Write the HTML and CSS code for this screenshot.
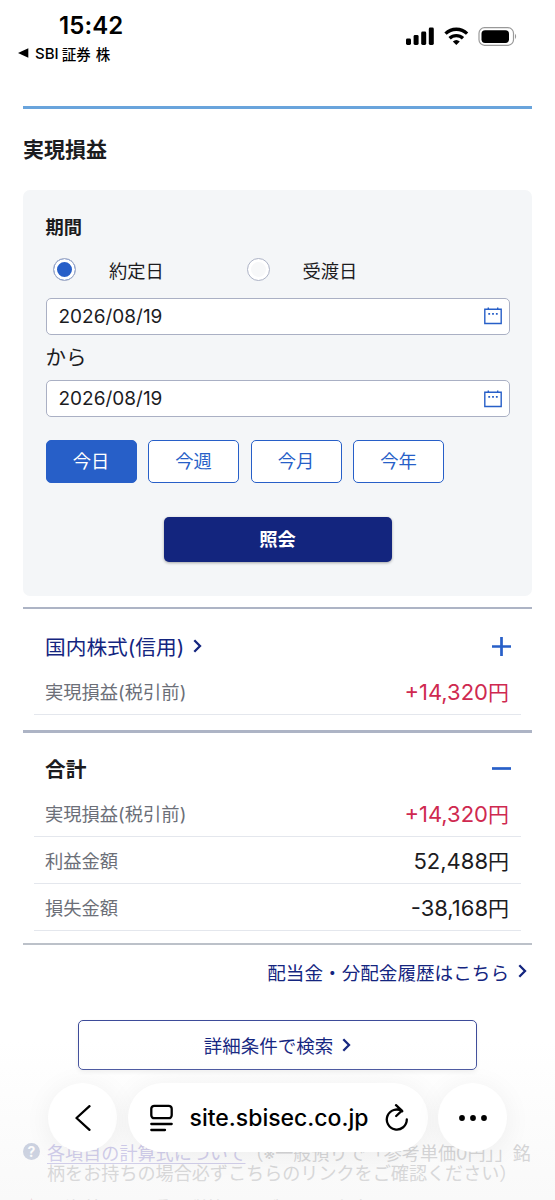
FILE: index.html
```html
<!DOCTYPE html>
<html lang="ja">
<head>
<meta charset="utf-8">
<title>実現損益</title>
<link rel="stylesheet" href="styles.css">
</head>
<body>
<header class="status">
  <div class="status-left">
    <div class="clock">15:42</div>
    <div class="back-app"><svg width="11" height="10" viewBox="0 0 11 10"><path d="M0 5 10.300 .3V9.700Z"/></svg><span class="app-name">SBI</span><span class="app-jp">証券</span><span class="app-jp">株</span></div>
  </div>
  <svg class="status-icons" width="114" height="20" viewBox="0 0 114 20">
    <rect x="0" y="11.500" width="5" height="6.500" rx="1.400"/><rect x="7.600" y="8" width="5" height="10" rx="1.400"/><rect x="15.200" y="4.500" width="5" height="13.500" rx="1.400"/><rect x="22.800" y="0.500" width="5" height="17.500" rx="1.400"/>
    <g fill="none" stroke="#000" stroke-width="3.300"><path d="M39.500 6.600a15.600 15.600 0 0 1 21.600 0"/><path d="M43.600 11.300a9.700 9.700 0 0 1 13.400 0"/></g>
    <path d="M46.800 14.500a5.300 5.300 0 0 1 7 0L50.300 18Z"/>
    <rect x="73" y=".7" width="34.500" height="17.600" rx="5.500" fill="none" stroke="#999" stroke-width="1.200"/><rect x="75.500" y="3.200" width="27.500" height="12.700" rx="3.600"/><path d="M109 6.800q2.300 2.700 0 5.500z" fill="#999"/>
  </svg>
</header>
<main class="page">
  <h1 class="title">実現損益</h1>
  <form class="panel">
    <div class="panel-label">期間</div>
    <div class="radios">
      <label class="radio"><span class="dot on"></span>約定日</label>
      <label class="radio"><span class="dot"></span>受渡日</label>
    </div>
    <div class="date"><span>2026/08/19</span><svg class="cal" width="18" height="18" viewBox="0 0 18 18"><path class="cal-line" d="M.8 2.300H17.200V16.500H.8ZM4.300 .4V3M13.700 .4V3"/><path class="cal-dots" d="M4.300 6.900H6.100M8.100 6.900H9.900M11.900 6.900H13.700"/></svg></div>
    <div class="from">から</div>
    <div class="date"><span>2026/08/19</span><svg class="cal" width="18" height="18" viewBox="0 0 18 18"><path class="cal-line" d="M.8 2.300H17.200V16.500H.8ZM4.300 .4V3M13.700 .4V3"/><path class="cal-dots" d="M4.300 6.900H6.100M8.100 6.900H9.900M11.900 6.900H13.700"/></svg></div>
    <div class="ranges"><div class="range active">今日</div><div class="range">今週</div><div class="range">今月</div><div class="range">今年</div></div>
    <div class="submit">照会</div>
  </form>
  <section class="group">
    <div class="group-head link">国内株式(信用)<svg class="chev" width="9" height="14" viewBox="0 0 9 14"><path d="M1.300 1.300 7 7 1.300 12.700"/></svg><svg class="toggle" width="19" height="19" viewBox="0 0 19 19"><path d="M0 9.500H19M9.500 0V19"/></svg></div>
    <div class="row"><span>実現損益(税引前)</span><b class="plus">+14,320<i>円</i></b></div>
  </section>
  <section class="group total">
    <div class="group-head strong">合計<svg class="toggle" width="19" height="19" viewBox="0 0 19 19"><path d="M0 9.500H19"/></svg></div>
    <div class="row"><span>実現損益(税引前)</span><b class="plus">+14,320<i>円</i></b></div>
    <div class="row"><span>利益金額</span><b>52,488<i>円</i></b></div>
    <div class="row"><span>損失金額</span><b>-38,168<i>円</i></b></div>
  </section>
  <div class="history">配当金・分配金履歴はこちら<svg class="chev" width="9" height="14" viewBox="0 0 9 14"><path d="M1.300 1.300 7 7 1.300 12.700"/></svg></div>
  <div class="detail">詳細条件で検索<svg class="chev" width="9" height="14" viewBox="0 0 9 14"><path d="M1.300 1.300 7 7 1.300 12.700"/></svg></div>
  <div class="notes">
    <span class="help">?</span>
    <p><u>各項目の計算式について</u>（※一般預りで「参考単価0円」」銘<br>柄をお持ちの場合必ずこちらのリンクをご確認ください）</p>
  </div>
  <div class="notes second"><span class="warn"></span><p>・海外ETF二重課税等は、ブローカ上表示いた</p></div>
</main>
<div class="haze"></div>
<nav class="toolbar">
  <div class="round"><svg width="16" height="26" viewBox="0 0 16 26"><path d="M14.500 1.200 1.500 13 14.500 24.800"/></svg></div>
  <div class="address">
    <svg width="24" height="28" viewBox="0 0 24 28"><rect x="1.300" y="1.800" width="20.400" height="12.400" rx="3"/><path d="M1.300 20H21.700M1.300 26H15"/></svg>
    <span>site.sbisec.co.jp</span>
    <svg class="reload" width="24" height="28" viewBox="0 0 24 28"><path d="M17.300 7.200A10 10 0 1 0 21.800 15.500M11 1.200 16.900 6.600 11.200 12"/></svg>
  </div>
  <div class="round"><svg width="30" height="8" viewBox="0 0 30 8"><g fill="#000" stroke="none"><circle cx="4" cy="4" r="2.900"/><circle cx="15" cy="4" r="2.900"/><circle cx="26" cy="4" r="2.900"/></g></svg></div>
</nav>
</body>
</html>
```

FILE: styles.css
```css
* { box-sizing: border-box; }
body { margin: 0; width: 555px; height: 1200px; overflow: hidden; position: relative; background: #fff; color: #1c1c1f; font-family: Inter, "Noto Sans CJK JP", sans-serif; }
svg { display: block; flex: none; }
.status { height: 106px; padding: 11px 36px 0 18px; display: flex; justify-content: space-between; color: #000; }
.clock { padding-left: 41px; font-size: 24px; line-height: 30px; font-weight: 600; letter-spacing: .1px; }
.back-app { display: flex; align-items: center; height: 24px; font-size: 15px; font-weight: 500; }
.app-name { margin: 0 3px 0 6px; }
.app-jp { margin-right: 5px; font-size: 14.500px; }
.status-icons { margin-top: 16px; margin-right: -1px; }
.page { margin: 0 23px; border-top: 3.500px solid #69a4dc; }
.title { margin: 0; height: 80.500px; line-height: 82px; font-size: 21px; font-weight: 700; }
.panel { height: 406px; padding: 22px 22.500px 0; background: #f4f6f8; border-radius: 7px; display: flex; flex-direction: column; }
.panel-label { height: 30px; line-height: 30px; font-size: 18.300px; font-weight: 700; }
.radios { display: flex; height: 56px; padding: 0 0 0 7.500px; }
.radio { display: flex; align-items: center; width: 193.500px; gap: 33px; font-size: 18.300px; }
.dot { width: 23px; height: 23px; border: 1.500px solid #aeb4c7; border-radius: 50%; background: #f7f8f9; box-shadow: inset 0 0 0 3px #fff; }
.on { background: #275fc8; }
.date { flex: none; height: 37px; display: flex; align-items: center; justify-content: space-between; padding: 0 7px 0 12px; border: 1.500px solid #aab0c4; border-radius: 5px; background: #fff; font-size: 19px; }
.cal-line { fill: none; stroke: #275fc8; stroke-width: 1.400; }
.cal-dots { stroke: #275fc8; stroke-width: 1.600; }
.from { height: 45.500px; line-height: 45.500px; font-size: 20.500px; }
.ranges { margin-top: 22.500px; display: flex; gap: 11.500px; }
.range { width: 91px; height: 43px; line-height: 41px; text-align: center; font-size: 18.300px; color: #275fc8; background: #fff; border: 1.500px solid #275fc8; border-radius: 5px; }
.active { color: #fff; background: #275fc8; }
.submit { align-self: center; margin-top: 34px; width: 228px; height: 45.500px; line-height: 44px; border-radius: 5px; background: #13257e; color: #fff; font-size: 18.300px; font-weight: 700; text-align: center; box-shadow: 0 1px 3px #0005; }
.group { margin-top: 11.500px; border-top: 2px solid #adb4c5; padding: 15px 11px 0; }
.group-head { display: flex; align-items: center; height: 44px; padding: 0 11px; font-size: 20.700px; }
.link, .history, .detail { color: #14257f; }
.strong { font-weight: 700; }
.chev { fill: none; stroke: #14257f; stroke-width: 2.300; margin-left: 9px; }
.toggle { margin-left: auto; margin-right: -1px; fill: none; stroke: #275fc8; stroke-width: 2.700; }
.row { height: 47px; padding: 0 12px 0 11px; display: flex; align-items: center; justify-content: space-between; border-bottom: 1.500px solid #e4e7ed; font-size: 18.300px; color: #6c6f78; }
.row b { font-size: 22px; font-weight: 400; color: #1c1c1f; }
.row i { font-style: normal; font-size: 21px; }
.row .plus { color: #cf2950; }
.total { margin-top: 15px; padding-top: 13px; border-top-width: 3px; border-bottom: 2px solid #bcc1c9; padding-bottom: 12px; }
.history { height: 52px; display: flex; align-items: center; justify-content: flex-end; padding-right: 5px; font-size: 18.600px; }
.detail { width: 399px; height: 50px; margin: 23px auto 0; display: flex; align-items: center; justify-content: center; border: 1.500px solid #3d4b99; border-radius: 5px; font-size: 18.500px; background: #fff; box-shadow: 0 2px 4px #0001; }
.notes { display: flex; margin-top: 73px; color: #c4c4c6; font-size: 18.100px; line-height: 20px; white-space: nowrap; }
.notes p { margin: 0 0 0 7px; }
.notes u { color: #bdb8e5; text-underline-offset: 3px; }
.help { width: 17px; height: 17px; border-radius: 50%; background: #b7c0d6; color: #fff; text-align: center; font-size: 14px; line-height: 17px; font-weight: 700; }
.notes.second { margin-top: 15px; }
.warn { width: 17px; height: 17px; background: #efc3cc; clip-path: polygon(50% 0, 100% 100%, 0 100%); }
.haze { position: absolute; inset: 1040px 0 0; background: linear-gradient(#f3f3f300, #f3f3f380); }
.toolbar { position: absolute; left: 48px; right: 48px; top: 1083px; display: flex; justify-content: space-between; }
.toolbar svg { fill: none; stroke: #000; stroke-width: 2.300; stroke-linecap: round; stroke-linejoin: round; }
.round, .address { height: 69px; background: #fff; box-shadow: 0 3px 28px #0000000f; display: flex; align-items: center; }
.round { width: 69px; border-radius: 50%; justify-content: center; }
.address { width: 300px; border-radius: 35px; padding: 0 19px 0 22px; justify-content: space-between; font-size: 23px; font-weight: 500; color: #000; }
```
